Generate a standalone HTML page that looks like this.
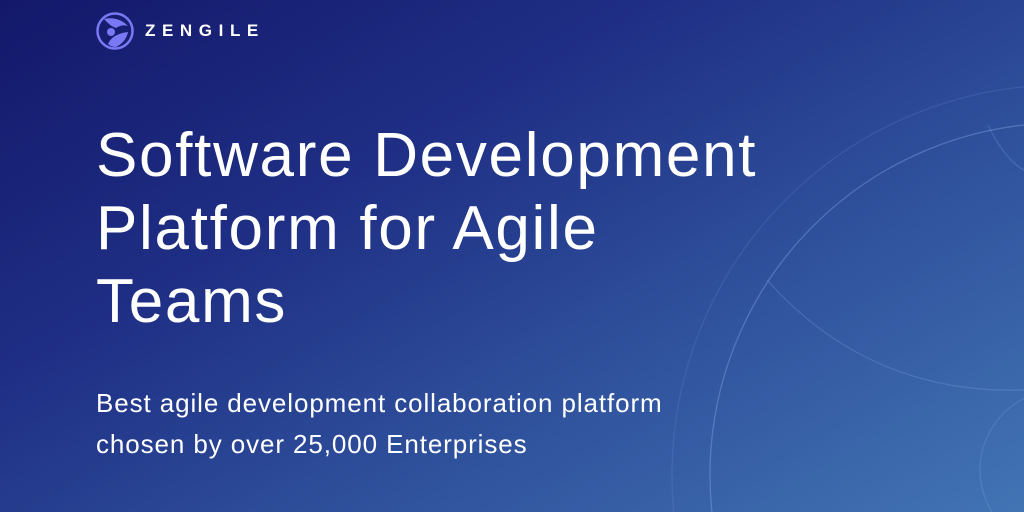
<!DOCTYPE html>
<html><head><meta charset="utf-8"><style>
html,body{margin:0;padding:0;width:1024px;height:512px;overflow:hidden}
body{position:relative;font-family:"Liberation Sans",sans-serif;
background:linear-gradient(150deg,#13186a 0%,#1f2f85 35%,#2f519c 65%,#4274b4 100%);}
svg.bg{position:absolute;left:0;top:0;display:block}
.logo{position:absolute;left:96px;top:12px}
.brand{position:absolute;left:145px;top:21px;color:#fff;font-weight:bold;font-size:17px;letter-spacing:6.6px}
h1{position:absolute;left:96px;top:119px;margin:0;color:#fff;font-weight:normal;font-size:62px;line-height:73px;letter-spacing:1.7px;white-space:nowrap}
p{position:absolute;left:96px;top:383px;margin:0;color:#fff;font-size:26px;line-height:41px;letter-spacing:0.9px;white-space:nowrap}
</style></head><body>
<svg class="bg" width="1024" height="512">
<g fill="none" stroke="rgba(150,180,240,0.35)" stroke-width="1.3">
<circle cx="1062" cy="475" r="352"/>
<circle cx="1062" cy="475" r="390" stroke="rgba(150,180,240,0.14)"/>
<path d="M767 280 Q870 395 1024 390" stroke="rgba(150,180,240,0.22)"/>
<path d="M988 125 Q1005 160 1024 170" stroke="rgba(150,180,240,0.22)"/>
<circle cx="1060" cy="470" r="80" stroke="rgba(150,180,240,0.2)"/>
</g></svg>
<svg class="logo" width="38" height="38" viewBox="0 0 38 38">
<circle cx="19" cy="19" r="17.5" fill="none" stroke="#7b78f5" stroke-width="2.5"/>
<path d="M8 7 Q22 4 32 14 Q26 12 20 16 Q14 14 8 7Z" fill="#7b78f5"/>
<circle cx="15" cy="20" r="4" fill="#7b78f5"/>
<path d="M12 32 Q16 22 32 20 Q30 30 20 35 Q15 35 12 32Z" fill="#7b78f5"/>
</svg>
<div class="brand">ZENGILE</div>
<h1>Software Development<br>Platform for Agile<br>Teams</h1>
<p>Best agile development collaboration platform<br>chosen by over 25,000 Enterprises</p>
</body></html>
